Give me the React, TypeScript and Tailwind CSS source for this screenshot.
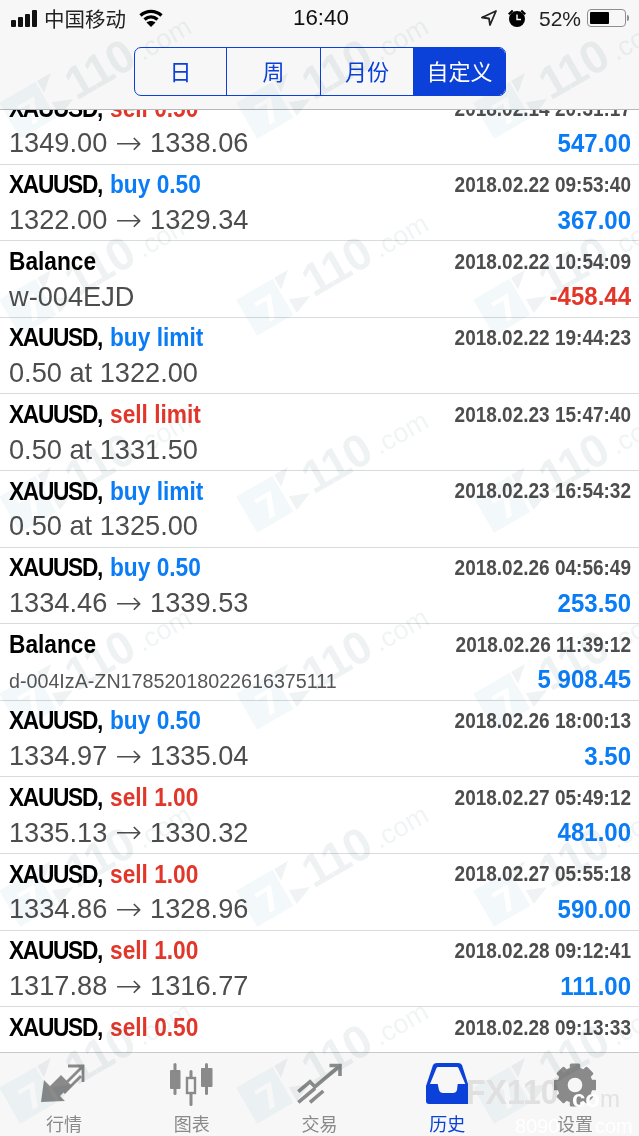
const SANS = "font-['Liberation_Sans',Arial,sans-serif]";
const CJK = "font-['Noto_Sans_CJK_SC',sans-serif]";

type Row = {
  title: string;
  action?: string;
  side?: "buy" | "sell";
  time: string;
  detail: string;
  amount?: string;
  negative?: boolean;
  small?: boolean;
};

const rows: Row[] = [
  { title: "XAUUSD,", action: "sell 0.50", side: "sell", time: "2018.02.14 20:31:17", detail: "1349.00 → 1338.06", amount: "547.00" },
  { title: "XAUUSD,", action: "buy 0.50", side: "buy", time: "2018.02.22 09:53:40", detail: "1322.00 → 1329.34", amount: "367.00" },
  { title: "Balance", time: "2018.02.22 10:54:09", detail: "w-004EJD", amount: "-458.44", negative: true },
  { title: "XAUUSD,", action: "buy limit", side: "buy", time: "2018.02.22 19:44:23", detail: "0.50 at 1322.00" },
  { title: "XAUUSD,", action: "sell limit", side: "sell", time: "2018.02.23 15:47:40", detail: "0.50 at 1331.50" },
  { title: "XAUUSD,", action: "buy limit", side: "buy", time: "2018.02.23 16:54:32", detail: "0.50 at 1325.00" },
  { title: "XAUUSD,", action: "buy 0.50", side: "buy", time: "2018.02.26 04:56:49", detail: "1334.46 → 1339.53", amount: "253.50" },
  { title: "Balance", time: "2018.02.26 11:39:12", detail: "d-004IzA-ZN17852018022616375111", amount: "5 908.45", small: true },
  { title: "XAUUSD,", action: "buy 0.50", side: "buy", time: "2018.02.26 18:00:13", detail: "1334.97 → 1335.04", amount: "3.50" },
  { title: "XAUUSD,", action: "sell 1.00", side: "sell", time: "2018.02.27 05:49:12", detail: "1335.13 → 1330.32", amount: "481.00" },
  { title: "XAUUSD,", action: "sell 1.00", side: "sell", time: "2018.02.27 05:55:18", detail: "1334.86 → 1328.96", amount: "590.00" },
  { title: "XAUUSD,", action: "sell 1.00", side: "sell", time: "2018.02.28 09:12:41", detail: "1317.88 → 1316.77", amount: "111.00" },
  { title: "XAUUSD,", action: "sell 0.50", side: "sell", time: "2018.02.28 09:13:33", detail: "1316.70 → 1316.70" },
];

// the arrow in Liberation is too short, DejaVu's has the reference's length
function Detail({ text }: { text: string }) {
  const parts = text.split(" → ");
  if (parts.length < 2) return <>{text}</>;
  return (
    <>
      {parts[0]}
      <span className="font-['DejaVu_Sans',sans-serif] font-extralight text-[32px] leading-none mx-[8px]">→</span>
      {parts[1]}
    </>
  );
}

function TradeRow({ row }: { row: Row }) {
  return (
    <div className="h-[76.6px] shrink-0 border-b border-[#d8dbdc] pl-[9px] pr-[8px] flex flex-col">
      <div className="h-[38px] pt-[2px] flex items-center justify-between">
        <div className="text-[22.7px] leading-none font-bold whitespace-nowrap inline-block scale-y-[1.12]">
          <span className={row.title === "Balance" ? "text-black" : "text-black tracking-[-1.3px]"}>{row.title}</span>
          {row.action && (
            <span className={row.side === "buy" ? "ml-[8px] text-[#0a7cf5]" : "ml-[8px] text-[#e2362a]"}>{row.action}</span>
          )}
        </div>
        <div className="text-[19px] leading-none font-bold text-[#4d4d4d] inline-block scale-y-[1.15]">{row.time}</div>
      </div>
      <div className="h-[34px] flex items-center justify-between">
        <div className={row.small ? "text-[19.7px] leading-none text-[#555] pt-[5px]" : "h-[27px] flex items-center text-[27.2px] leading-none text-[#4d4d4d]"}>
          <Detail text={row.detail} />
        </div>
        {row.amount && (
          <div className={row.negative ? "text-[24px] leading-none font-bold text-[#e2362a] inline-block scale-y-[1.08]" : "text-[24px] leading-none font-bold text-[#0a7cf5] inline-block scale-y-[1.08]"}>
            {row.amount}
          </div>
        )}
      </div>
    </div>
  );
}

function StatusBar() {
  return (
    <div className="h-[47px] pt-[7px] pl-[11px] pr-[10px] relative flex items-start justify-between text-black">
      <div className="h-[22px] flex items-center">
        <div className="flex items-end gap-[2px] h-[17px]">
          <div className="w-[5px] h-[7px] rounded-[1px] bg-[#111]" />
          <div className="w-[5px] h-[10px] rounded-[1px] bg-[#111]" />
          <div className="w-[5px] h-[13px] rounded-[1px] bg-[#111]" />
          <div className="w-[5px] h-[17px] rounded-[1px] bg-[#111]" />
        </div>
        <span className={`${CJK} ml-[7px] text-[20.5px] leading-none text-[#222]`}>中国移动</span>
        <svg className="ml-[13px]" width="24" height="18" viewBox="0 0 24 18" fill="none" stroke="#000" strokeWidth="3.4">
          <path d="M1.5 6.5C7.5 1 16.5 1 22.5 6.5" />
          <path d="M5.5 10.5C9.5 7 14.5 7 18.5 10.5" />
          <path d="M12 18L7.5 13.4C10.2 11.4 13.8 11.4 16.5 13.4Z" fill="#000" stroke="none" />
        </svg>
      </div>
      <div className={`${SANS} absolute left-[293px] top-[7px] h-[22px] flex items-center text-[22.3px] leading-none text-[#111]`}>16:40</div>
      <div className="h-[22px] flex items-center">
        <svg width="16" height="16" viewBox="0 0 16 16" fill="none" stroke="#222" strokeWidth="1.8" strokeLinejoin="round">
          <path d="M15 1L1 7.5L8 8.5L9 15Z" />
        </svg>
        <svg className="ml-[10px]" width="20" height="20" viewBox="0 0 20 20">
          <circle cx="10" cy="11" r="8" fill="#000" />
          <path d="M1 5.5L5 1.8L6.5 3.2L2.5 7ZM19 5.5L15 1.8L13.5 3.2L17.5 7Z" fill="#000" />
          <path d="M10 6.5V11.5H14" fill="none" stroke="#fff" strokeWidth="1.4" />
        </svg>
        <span className={`${SANS} ml-[12px] text-[21px] leading-none text-[#222]`}>52%</span>
        <div className="ml-[6px] w-[39px] h-[18px] rounded-[4px] border border-[#8f8f8f] p-[2px] flex">
          <div className="w-[19px] bg-black rounded-[1px]" />
        </div>
        <div className="ml-[1px] w-[2px] h-[6px] rounded-r-[2px] bg-[#8f8f8f]" />
      </div>
    </div>
  );
}

function Segments() {
  return (
    <div className="flex justify-center">
      <div className={`${CJK} ml-[1px] w-[372px] h-[49px] flex rounded-[7px] border-[1.5px] border-[#0b41d9] overflow-hidden text-[22px] text-[#0b41d9]`}>
        <div className="w-[92px] pb-[3px] flex items-center justify-center border-r-[1.5px] border-[#0b41d9]">日</div>
        <div className="w-[94px] pb-[3px] flex items-center justify-center border-r-[1.5px] border-[#0b41d9]">周</div>
        <div className="w-[93px] pb-[3px] flex items-center justify-center border-r-[1.5px] border-[#0b41d9]">月份</div>
        <div className="flex-1 pb-[3px] flex items-center justify-center bg-[#0b41d9] text-white">自定义</div>
      </div>
    </div>
  );
}

function QuotesIcon() {
  return (
    <svg width="46" height="40" viewBox="0 0 46 40" className="-translate-x-[1px]">
      <path d="M1 39L4 17L10 23L21 12L31 22L20 33L25 38Z" fill="#8a8a8a" />
      <path d="M28 3H43V19M43 3L36 10M37 9L20 26M41 13L24 30" fill="none" stroke="#8a8a8a" strokeWidth="2.8" />
    </svg>
  );
}

function ChartIcon() {
  return (
    <svg width="44" height="43" viewBox="0 0 44 43" fill="#8a8a8a" className="-translate-x-[1px]">
      <rect x="4.5" y="0" width="3" height="32" rx="1.5" />
      <rect x="1" y="7" width="10.5" height="19" rx="1" />
      <rect x="20.5" y="7" width="3" height="36" rx="1.5" />
      <rect x="18" y="15" width="8" height="15" fill="#f7f7f7" stroke="#8a8a8a" strokeWidth="2.4" />
      <rect x="36" y="0" width="3" height="32" rx="1.5" />
      <rect x="32" y="5" width="11.5" height="19" rx="1" />
    </svg>
  );
}

function TradeIcon() {
  return (
    <svg width="46" height="42" viewBox="0 0 46 42" fill="none" stroke="#8a8a8a" strokeWidth="3.6">
      <path d="M2.3 28.7L14 18.7L19 23.7L43 3.5" />
      <path d="M33.5 2.5H44V13" />
      <path d="M2.3 39.3L19 25.3M14 39.3L27.3 28" />
    </svg>
  );
}

function HistoryIcon() {
  return (
    <svg width="42" height="41" viewBox="0 0 42 41">
      <path
        fillRule="evenodd"
        fill="#0b41d9"
        d="M0 23L7 2Q8 0 11 0H32Q35 0 36 2L42 21V41H3Q0 41 0 38ZM4 21H11.7L13 27Q14 30 17 30H27Q30 30 31 27L31.7 21H39.3L32.5 5Q32 4 31 4H12Q11 4 10.5 5Z"
      />
    </svg>
  );
}

function GearIcon() {
  const angles = [0, 45, 90, 135, 180, 225, 270, 315];
  return (
    <svg width="42" height="44" viewBox="0 0 40 42" fill="#8a8a8a">
      {angles.map((a) => (
        <rect key={a} x="15" y="0.5" width="10" height="10" rx="1.5" transform={`rotate(${a} 20 21)`} />
      ))}
      <circle cx="20" cy="21" r="12" fill="none" stroke="#8a8a8a" strokeWidth="10" />
    </svg>
  );
}

const tabs = [
  { label: "行情", icon: <QuotesIcon /> },
  { label: "图表", icon: <ChartIcon /> },
  { label: "交易", icon: <TradeIcon /> },
  { label: "历史", icon: <HistoryIcon />, active: true },
  { label: "设置", icon: <GearIcon /> },
];

function TabBar() {
  return (
    <div className="h-[84px] shrink-0 bg-[#f7f7f7] border-t border-[#c9c9c9] flex">
      {tabs.map((tab) => (
        <div key={tab.label} className="flex-1 flex flex-col items-center">
          <div className="h-[58px] pt-[10px] flex items-start justify-center">{tab.icon}</div>
          <span className={tab.active ? `${CJK} text-[18px] leading-[26px] text-[#0b41d9]` : `${CJK} text-[18px] leading-[26px] text-[#8a8a8a]`}>
            {tab.label}
          </span>
        </div>
      ))}
    </div>
  );
}

const markCols = [0, 237, 474];
const markRows = [11, 208, 405, 602, 799, 996];

function Watermark() {
  return (
    <>
      <div className="absolute inset-0 z-10 pointer-events-none overflow-hidden mix-blend-multiply">
        {markRows.flatMap((y) =>
          markCols.map((x) => (
            <div key={`${x}-${y}`} className="absolute w-0 h-0" style={{ left: x + 20, top: y + 128 }}>
              <div className="absolute left-0 bottom-0 flex items-end whitespace-nowrap origin-bottom-left -rotate-30">
                <svg width="76" height="42" viewBox="0 0 76 42" className="shrink-0">
                  <path d="M0 0H42V42H0ZM14 12V16H26L18 36H24L33 13V12Z" fill="#f3f8fb" fillRule="evenodd" />
                  <path d="M44 14L60 0H44ZM46 42V26L66 34Z" fill="#f0f3f4" />
                </svg>
                <span className={`${SANS} text-[46px] leading-[42px] font-bold text-[#eef2f3] -ml-[8px] tracking-[-1px]`}>110</span>
                <span className={`${SANS} text-[27px] leading-[30px] text-[#f1f4f5] ml-[6px]`}>.com</span>
              </div>
            </div>
          ))
        )}
        <span className={`${SANS} absolute left-[466px] top-[1076px] text-[32px] leading-none font-bold text-[#e8e8e8] inline-block scale-y-[1.1]`}>FX110</span>
      </div>
      <div className="absolute inset-0 z-10 pointer-events-none overflow-hidden">
        <span className={`${SANS} absolute left-[572px] top-[1087px] text-[24px] leading-none font-bold text-white`}>co</span>
        <span className={`${SANS} absolute left-[600px] top-[1087px] text-[24px] leading-none text-[#e2e2e2]`}>m</span>
        <span className={`${SANS} absolute left-[515px] top-[1116px] text-[20px] leading-none text-white`}>8090</span>
        <span className={`${SANS} absolute left-[595px] top-[1116px] text-[20px] leading-none text-white`}>com</span>
      </div>
    </>
  );
}

export default function App() {
  return (
    <div className={`${SANS} relative w-full h-[1136px] overflow-hidden bg-white flex flex-col`}>
      <div className="h-[110px] shrink-0 bg-[#f7f7f7] border-b border-[#b8b8b8] relative z-[1]">
        <StatusBar />
        <Segments />
      </div>
      <div className="flex-1 min-h-0 overflow-hidden">
        <div className="-mt-[22px] flex flex-col">
          {rows.map((row, i) => (
            <TradeRow key={i} row={row} />
          ))}
        </div>
      </div>
      <TabBar />
      <Watermark />
    </div>
  );
}
